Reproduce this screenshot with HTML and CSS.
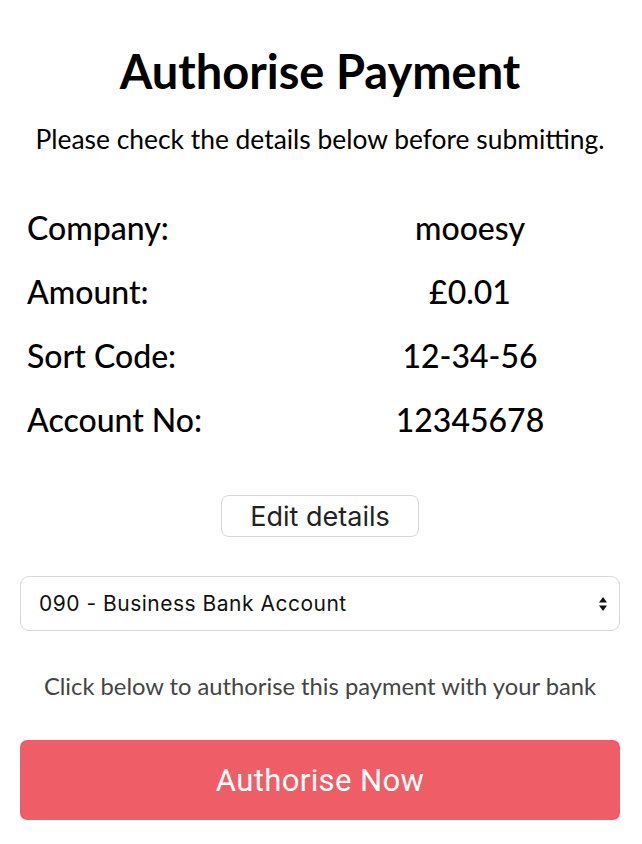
FILE: index.html
```html
<!DOCTYPE html>
<html>
<head>
<meta charset="utf-8">
<link rel="stylesheet" href="styles.css">
</head>
<body>
<main class="page">
  <h1 class="title">Authorise Payment</h1>
  <p class="subtitle">Please check the details below before submitting.</p>
  <div class="details">
    <div class="label">Company:</div><div class="value">mooesy</div>
    <div class="label">Amount:</div><div class="value">£0.01</div>
    <div class="label">Sort Code:</div><div class="value">12-34-56</div>
    <div class="label">Account No:</div><div class="value">12345678</div>
  </div>
  <div class="edit-wrap"><button class="edit">Edit details</button></div>
  <div class="select">
    <span class="select-text">090 - Business Bank Account</span>
    <svg class="arrows" width="10" height="18" viewBox="0 0 10 18"><path d="M5 2 L9 7.5 H1 Z" fill="#111"/><path d="M5 16 L9 10.5 H1 Z" fill="#111"/></svg>
  </div>
  <p class="hint">Click below to authorise this payment with your bank</p>
  <button class="authorise">Authorise Now</button>
</main>
</body>
</html>
```
FILE: styles.css
```css
html, body { margin: 0; padding: 0; background: #fff; }
.page {
  padding: 0 22px 0 20px;
  font-family: Lato, "Noto Sans", sans-serif;
  color: #000;
  display: flex;
  flex-direction: column;
}
.title {
  margin: 43px 0 0;
  font-size: 47px;
  font-weight: 700;
  text-align: center;
  line-height: 56px;
}
.subtitle {
  margin: 25px 0 0;
  font-size: 26.4px;
  text-align: center;
  line-height: 30px;
  white-space: nowrap;
}
.details {
  margin-top: 54px;
  display: grid;
  grid-template-columns: 1fr 1fr;
  row-gap: 24px;
  font-size: 32px;
  font-weight: 500;
  line-height: 40px;
}
.label { padding-left: 7px; }
.value { text-align: center; }
.edit-wrap { display: flex; justify-content: center; margin-top: 55px; }
.edit {
  width: 198px;
  height: 42px;
  background: #fff;
  border: 1px solid #d6d6db;
  border-radius: 8px;
  font-family: Inter, Roboto, sans-serif;
  font-size: 27px;
  color: #222;
  padding: 0;
}
.select {
  margin-top: 39px;
  height: 55px;
  box-sizing: border-box;
  border: 1px solid #d6d6db;
  border-radius: 9px;
  display: flex;
  align-items: center;
  justify-content: space-between;
  padding: 0 11px 0 18px;
  font-family: Inter, Roboto, sans-serif;
  font-size: 21px;
  letter-spacing: 0.5px;
  color: #111;
}
.hint {
  margin: 40px 0 0;
  text-align: center;
  font-size: 23.75px;
  line-height: 30px;
  color: #444;
  white-space: nowrap;
}
.authorise {
  margin-top: 39px;
  height: 80px;
  border: none;
  border-radius: 7px;
  background: #ef5e66;
  color: #fff;
  font-family: Roboto, "Liberation Sans", sans-serif;
  font-size: 31px;
  letter-spacing: 0.4px;
  padding: 0;
}
```
